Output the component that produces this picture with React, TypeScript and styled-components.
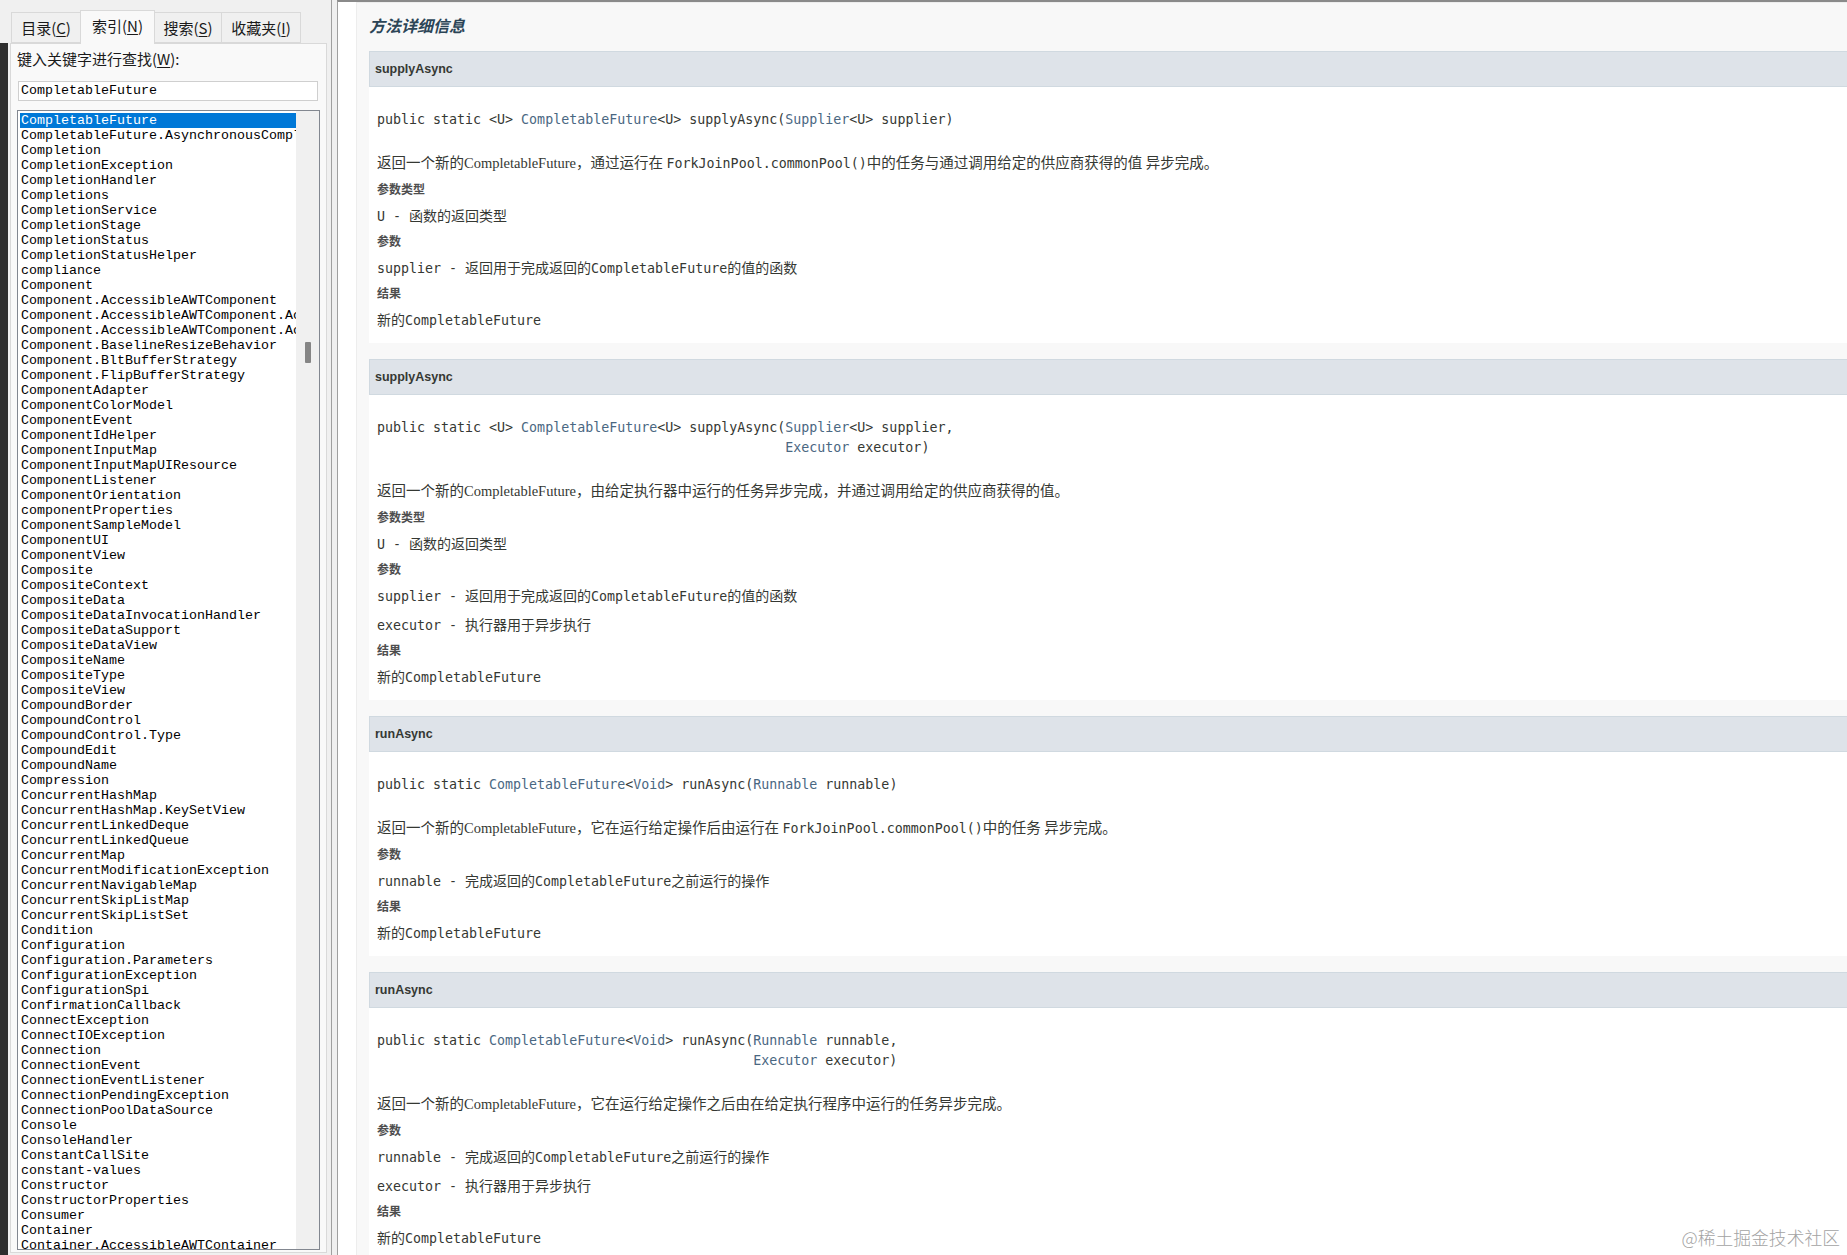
import React from 'react';
import styled, { createGlobalStyle } from 'styled-components';

const GlobalStyle = createGlobalStyle`
  html, body { margin: 0; padding: 0; width: 1847px; height: 1255px; overflow: hidden; background: #f0f0f0; }
  #root { width: 1847px; height: 1255px; }
  * { box-sizing: border-box; }
`;

const Window = styled.div`
  position: relative;
  display: flex;
  width: 1847px;
  height: 1255px;
  overflow: hidden;
`;

const LeftEdge = styled.div`
  width: 8px;
  flex-shrink: 0;
  display: flex;
  flex-direction: column;
`;
const EdgeTop = styled.div`height: 43px; background: #f0f0f0;`;
const EdgeRest = styled.div`flex: 1; background: #2e2e2e;`;

const LeftPane = styled.div`
  width: 324px;
  flex-shrink: 0;
  background: #f0f0f0;
  border-right: 1px solid #a0a0a0;
  display: flex;
  flex-direction: column;
  padding: 10px 4px 2px 2px;
`;

const TabStrip = styled.div`
  height: 33px;
  display: flex;
  align-items: flex-end;
  padding-left: 1px;
  position: relative;
  z-index: 2;
`;

const Tab = styled.div<{ $active?: boolean; $w: number }>`
  width: ${p => p.$w}px;
  height: ${p => (p.$active ? 34 : 31)}px;
  margin-right: -1px;
  margin-bottom: ${p => (p.$active ? -1 : 0)}px;
  border: 1px solid #d9d9d9;
  border-bottom: ${p => (p.$active ? 'none' : '1px solid #d9d9d9')};
  background: ${p => (p.$active ? '#f9f9f9' : '#f0f0f0')};
  display: flex;
  align-items: center;
  justify-content: center;
  padding-bottom: ${p => (p.$active ? 4 : 1)}px;
  font-family: 'Noto Sans CJK SC', 'Noto Sans', sans-serif;
  font-size: 15px;
  color: #1a1a1a;
  white-space: nowrap;
  position: relative;
  z-index: ${p => (p.$active ? 2 : 1)};
  u { text-decoration: underline; text-underline-offset: 2px; }
`;

const TabPanel = styled.div`
  flex: 1;
  min-height: 0;
  background: #f9f9f9;
  border: 1px solid #d9d9d9;
  padding: 5px 6px 2px 6px;
  display: flex;
  flex-direction: column;
`;

const SearchLabel = styled.div`
  height: 20px;
  line-height: 20px;
  font-family: 'Noto Sans CJK SC', 'Noto Sans', sans-serif;
  font-size: 15px;
  color: #1a1a1a;
  white-space: nowrap;
  u { text-decoration: underline; text-underline-offset: 2px; }
`;

const SearchInput = styled.div`
  margin: 12px 0 0 1px;
  width: 300px;
  height: 20px;
  border: 1px solid #cfcfcf;
  background: #fff;
  padding-left: 2px;
  font-family: 'Liberation Mono', 'DejaVu Sans Mono', monospace;
  font-size: 13.33px;
  line-height: 18px;
  color: #000;
`;

const ListBox = styled.div`
  margin-top: 9px;
  flex: 1;
  min-height: 0;
  width: 303px;
  border: 1px solid #828790;
  background: #fff;
  display: flex;
  overflow: hidden;
`;

const ListItems = styled.div`
  width: 278px;
  padding: 2px 0 0 2px;
  overflow: hidden;
`;

const ListItem = styled.div<{ $selected?: boolean }>`
  height: 15px;
  line-height: 15px;
  padding-left: 1px;
  white-space: nowrap;
  overflow: hidden;
  font-family: 'Liberation Mono', 'DejaVu Sans Mono', monospace;
  font-size: 13.33px;
  color: ${p => (p.$selected ? '#fff' : '#000')};
  background: ${p => (p.$selected ? '#0078d7' : 'transparent')};
`;

const ScrollTrack = styled.div`
  flex: 1;
  background: #f0f0f0;
  display: flex;
  flex-direction: column;
  align-items: center;
  padding-top: 231px;
`;

const ScrollThumb = styled.div`
  width: 6px;
  height: 21px;
  background: #858585;
  border-radius: 1px;
`;

const Splitter = styled.div`
  width: 5px;
  flex-shrink: 0;
  background: #f0f0f0;
`;

const RightPane = styled.div`
  flex: 1;
  min-width: 0;
  background: #fff;
  border-left: 1px solid #a0a0a0;
  border-top: 2px solid #8a8a8a;
  padding-left: 18px;
  overflow: hidden;
`;

const Details = styled.div`
  background: #f8f8f8;
  border: 1px solid #ededed;
  border-right: none;
  padding: 11px 0 0 12px;
  min-height: 1300px;
`;

const DetailsTitle = styled.h3`
  margin: 0 0 15px 0;
  height: 22px;
  line-height: 22px;
  font-family: 'Noto Sans CJK SC', 'DejaVu Sans', sans-serif;
  font-size: 16px;
  font-weight: 700;
  font-style: italic;
  color: #2c4557;
`;

const Member = styled.section`
  margin-bottom: 16px;
`;

const MemberHeader = styled.h4`
  margin: 0;
  height: 36px;
  line-height: 34px;
  background: #dee3e9;
  border: 1px solid #d0d9e0;
  border-right: none;
  padding-left: 5px;
  font-family: 'Liberation Sans', 'DejaVu Sans', sans-serif;
  font-size: 12.5px;
  font-weight: 700;
  color: #353833;
`;

const MemberBody = styled.div`
  background: #fff;
  padding: 23px 0 14px 8px;
`;

const Signature = styled.pre`
  margin: 0;
  font-family: 'DejaVu Sans Mono', 'Liberation Mono', monospace;
  font-size: 13.3px;
  line-height: 20px;
  color: #353833;
  white-space: pre;
`;

const TypeLink = styled.span`
  color: #4a6782;
`;

const Description = styled.div`
  margin-top: 23px;
  height: 20px;
  line-height: 20px;
  font-family: 'Liberation Serif', 'Noto Sans CJK SC', serif;
  font-size: 14.5px;
  color: #353833;
  white-space: nowrap;
`;

const Code = styled.span`
  font-family: 'DejaVu Sans Mono', 'Liberation Mono', monospace;
  font-size: 13.3px;
  line-height: 1;
`;

const Term = styled.div`
  margin-top: 8px;
  height: 18px;
  line-height: 18px;
  font-family: 'Liberation Sans', 'Noto Sans CJK SC', sans-serif;
  font-size: 12px;
  font-weight: 700;
  color: #4e4e4e;
`;

const Value = styled.div`
  margin-top: 6px;
  height: 20px;
  line-height: 20px;
  font-family: 'Noto Sans CJK SC', sans-serif;
  font-size: 14px;
  color: #353833;
  white-space: nowrap;
  & + & { margin-top: 9px; }
`;

const Watermark = styled.div`
  position: absolute;
  right: 7px;
  bottom: 7px;
  font-family: 'Noto Sans CJK SC', sans-serif;
  font-size: 17.8px;
  font-weight: 300;
  line-height: 22px;
  color: #a3a3a3;
`;

const listItems = [
  'CompletableFuture',
  'CompletableFuture.AsynchronousCompletionTask',
  'Completion',
  'CompletionException',
  'CompletionHandler',
  'Completions',
  'CompletionService',
  'CompletionStage',
  'CompletionStatus',
  'CompletionStatusHelper',
  'compliance',
  'Component',
  'Component.AccessibleAWTComponent',
  'Component.AccessibleAWTComponent.AccessibleAWTComponentHandler',
  'Component.AccessibleAWTComponent.AccessibleAWTFocusHandler',
  'Component.BaselineResizeBehavior',
  'Component.BltBufferStrategy',
  'Component.FlipBufferStrategy',
  'ComponentAdapter',
  'ComponentColorModel',
  'ComponentEvent',
  'ComponentIdHelper',
  'ComponentInputMap',
  'ComponentInputMapUIResource',
  'ComponentListener',
  'ComponentOrientation',
  'componentProperties',
  'ComponentSampleModel',
  'ComponentUI',
  'ComponentView',
  'Composite',
  'CompositeContext',
  'CompositeData',
  'CompositeDataInvocationHandler',
  'CompositeDataSupport',
  'CompositeDataView',
  'CompositeName',
  'CompositeType',
  'CompositeView',
  'CompoundBorder',
  'CompoundControl',
  'CompoundControl.Type',
  'CompoundEdit',
  'CompoundName',
  'Compression',
  'ConcurrentHashMap',
  'ConcurrentHashMap.KeySetView',
  'ConcurrentLinkedDeque',
  'ConcurrentLinkedQueue',
  'ConcurrentMap',
  'ConcurrentModificationException',
  'ConcurrentNavigableMap',
  'ConcurrentSkipListMap',
  'ConcurrentSkipListSet',
  'Condition',
  'Configuration',
  'Configuration.Parameters',
  'ConfigurationException',
  'ConfigurationSpi',
  'ConfirmationCallback',
  'ConnectException',
  'ConnectIOException',
  'Connection',
  'ConnectionEvent',
  'ConnectionEventListener',
  'ConnectionPendingException',
  'ConnectionPoolDataSource',
  'Console',
  'ConsoleHandler',
  'ConstantCallSite',
  'constant-values',
  'Constructor',
  'ConstructorProperties',
  'Consumer',
  'Container',
  'Container.AccessibleAWTContainer',
];

type Seg = [string, boolean?];
type Item = { kind: 'term'; text: string } | { kind: 'value'; code?: string; text: React.ReactNode };

interface MemberData {
  name: string;
  signature: Seg[];
  description: React.ReactNode;
  items: Item[];
}

const sp = (n: number) => ' '.repeat(n);
const CF = <Code>CompletableFuture</Code>;

const members: MemberData[] = [
  {
    name: 'supplyAsync',
    signature: [
      ['public static <U> '], ['CompletableFuture', true], ['<U> supplyAsync('], ['Supplier', true], ['<U> supplier)'],
    ],
    description: (
      <>返回一个新的CompletableFuture，通过运行在 <Code>ForkJoinPool.commonPool()</Code>中的任务与通过调用给定的供应商获得的值 异步完成。</>
    ),
    items: [
      { kind: 'term', text: '参数类型' },
      { kind: 'value', code: 'U - ', text: '函数的返回类型' },
      { kind: 'term', text: '参数' },
      { kind: 'value', code: 'supplier - ', text: <>返回用于完成返回的{CF}的值的函数</> },
      { kind: 'term', text: '结果' },
      { kind: 'value', text: <>新的{CF}</> },
    ],
  },
  {
    name: 'supplyAsync',
    signature: [
      ['public static <U> '], ['CompletableFuture', true], ['<U> supplyAsync('], ['Supplier', true], ['<U> supplier,\n' + sp(51)],
      ['Executor', true], [' executor)'],
    ],
    description: <>返回一个新的CompletableFuture，由给定执行器中运行的任务异步完成，并通过调用给定的供应商获得的值。</>,
    items: [
      { kind: 'term', text: '参数类型' },
      { kind: 'value', code: 'U - ', text: '函数的返回类型' },
      { kind: 'term', text: '参数' },
      { kind: 'value', code: 'supplier - ', text: <>返回用于完成返回的{CF}的值的函数</> },
      { kind: 'value', code: 'executor - ', text: '执行器用于异步执行' },
      { kind: 'term', text: '结果' },
      { kind: 'value', text: <>新的{CF}</> },
    ],
  },
  {
    name: 'runAsync',
    signature: [
      ['public static '], ['CompletableFuture', true], ['<'], ['Void', true], ['> runAsync('], ['Runnable', true], [' runnable)'],
    ],
    description: (
      <>返回一个新的CompletableFuture，它在运行给定操作后由运行在 <Code>ForkJoinPool.commonPool()</Code>中的任务 异步完成。</>
    ),
    items: [
      { kind: 'term', text: '参数' },
      { kind: 'value', code: 'runnable - ', text: <>完成返回的{CF}之前运行的操作</> },
      { kind: 'term', text: '结果' },
      { kind: 'value', text: <>新的{CF}</> },
    ],
  },
  {
    name: 'runAsync',
    signature: [
      ['public static '], ['CompletableFuture', true], ['<'], ['Void', true], ['> runAsync('], ['Runnable', true], [' runnable,\n' + sp(47)],
      ['Executor', true], [' executor)'],
    ],
    description: <>返回一个新的CompletableFuture，它在运行给定操作之后由在给定执行程序中运行的任务异步完成。</>,
    items: [
      { kind: 'term', text: '参数' },
      { kind: 'value', code: 'runnable - ', text: <>完成返回的{CF}之前运行的操作</> },
      { kind: 'value', code: 'executor - ', text: '执行器用于异步执行' },
      { kind: 'term', text: '结果' },
      { kind: 'value', text: <>新的{CF}</> },
    ],
  },
];

const tabs = [
  { label: '目录(', key: 'C', w: 70 },
  { label: '索引(', key: 'N', w: 75, active: true },
  { label: '搜索(', key: 'S', w: 68 },
  { label: '收藏夹(', key: 'I', w: 80 },
];

export default function App() {
  return (
    <>
      <GlobalStyle />
      <Window>
        <LeftEdge>
          <EdgeTop />
          <EdgeRest />
        </LeftEdge>
        <LeftPane>
          <TabStrip>
            {tabs.map(t => (
              <Tab key={t.key} $active={t.active} $w={t.w}>
                {t.label}<u>{t.key}</u>)
              </Tab>
            ))}
          </TabStrip>
          <TabPanel>
            <SearchLabel>
              键入关键字进行查找(<u>W</u>):
            </SearchLabel>
            <SearchInput>CompletableFuture</SearchInput>
            <ListBox>
              <ListItems>
                {listItems.map((it, i) => (
                  <ListItem key={i} $selected={i === 0}>{it}</ListItem>
                ))}
              </ListItems>
              <ScrollTrack>
                <ScrollThumb />
              </ScrollTrack>
            </ListBox>
          </TabPanel>
        </LeftPane>
        <Splitter />
        <RightPane>
          <Details>
            <DetailsTitle>方法详细信息</DetailsTitle>
            {members.map((m, i) => (
              <Member key={i}>
                <MemberHeader>{m.name}</MemberHeader>
                <MemberBody>
                  <Signature>
                    {m.signature.map(([t, link], j) =>
                      link ? <TypeLink key={j}>{t}</TypeLink> : <React.Fragment key={j}>{t}</React.Fragment>
                    )}
                  </Signature>
                  <Description>{m.description}</Description>
                  {m.items.map((it, j) =>
                    it.kind === 'term' ? (
                      <Term key={j}>{it.text}</Term>
                    ) : (
                      <Value key={j}>
                        {it.code && <Code>{it.code}</Code>}
                        {it.text}
                      </Value>
                    )
                  )}
                </MemberBody>
              </Member>
            ))}
          </Details>
        </RightPane>
        <Watermark>@稀土掘金技术社区</Watermark>
      </Window>
    </>
  );
}
